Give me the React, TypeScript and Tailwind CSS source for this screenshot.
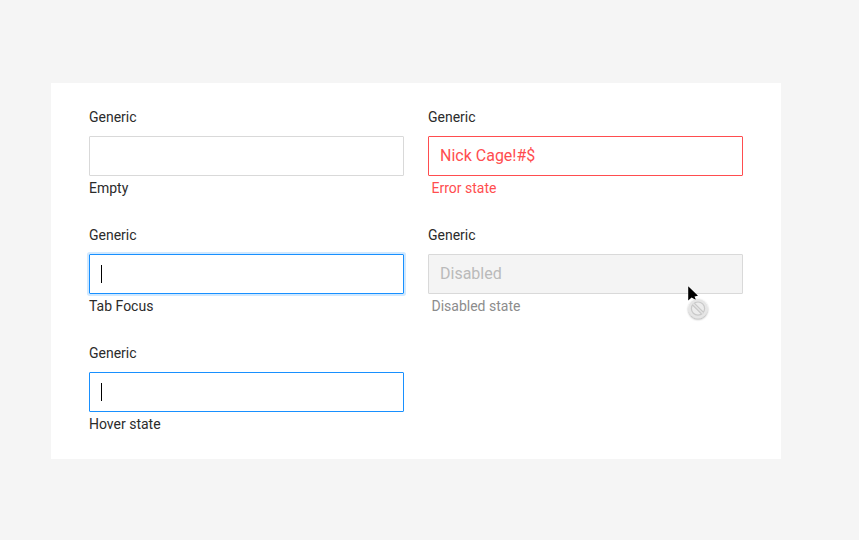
import React from "react";

type FieldProps = {
  caption: string;
  box: string;
  captionClass?: string;
  value?: string;
  caret?: boolean;
};

function Field({ caption, box, captionClass = "text-[#2b2b2b]", value, caret }: FieldProps) {
  return (
    <div className="h-[118px] w-[315px]">
      <div className="h-[27px] text-[14px] leading-[16px] text-[#2b2b2b]">Generic</div>
      <div className={`flex h-10 items-center rounded-[1px] border px-[11px] text-[16px] leading-[20px] ${box}`}>
        {caret && <span className="h-[18px] w-px bg-black" />}
        {value}
      </div>
      <div className={`mt-[4px] text-[14px] leading-[16px] ${captionClass}`}>{caption}</div>
    </div>
  );
}

function BlockedCursor() {
  return (
    <svg className="absolute top-[280px] left-[676px]" width="40" height="48" viewBox="0 0 40 48">
      <defs>
        <filter id="soft" x="-30%" y="-30%" width="160%" height="160%">
          <feDropShadow dx="0" dy="1" stdDeviation="0.9" floodColor="#000" floodOpacity="0.4" />
        </filter>
      </defs>
      <path d="M12.2 6.2V20.5L15.6 17.5L20 20L18.5 16.4L22 15.8Z" fill="#000" stroke="#fff" strokeWidth="1" paintOrder="stroke" />
      <circle cx="22" cy="28.6" r="9.6" fill="#e6e6e6" filter="url(#soft)" />
      <circle cx="22" cy="28.6" r="6.6" fill="#ececec" stroke="#c9c9c9" strokeWidth="1.2" />
      <path d="M17.6 24.2L26.4 33" stroke="#c4c4c4" strokeWidth="3.6" />
      <path d="M17 23.6L27 33.6" stroke="#e2e2e2" strokeWidth="1.6" />
    </svg>
  );
}

export default function App() {
  return (
    <div className="relative h-[540px] w-[859px] overflow-hidden bg-[#f5f5f5] pt-[83px] pl-[51px] font-['Roboto',sans-serif]">
      <main className="grid h-[376px] w-[730px] grid-cols-[315px_315px] content-start gap-x-6 bg-white pt-[26px] pl-[38px]">
        <Field caption="Empty" box="border-[#d9d9d9] bg-white" />
        <Field caption="Error state" captionClass="pl-[3.5px] text-[#ff4d4f]" value="Nick Cage!#$" box="border-[#ff4d4f] text-[#ff4d4f]" />
        <Field caption="Tab Focus" caret box="border-[#1890ff] shadow-[0_0_0_2px_#d1e9ff]" />
        <Field caption="Disabled state" captionClass="pl-[3.5px] text-[#8c8c8c]" value="Disabled" box="border-[#d9d9d9] bg-[#f4f4f4] text-[#bababa]" />
        <Field caption="Hover state" caret box="border-[#1890ff]" />
      </main>
      <BlockedCursor />
    </div>
  );
}
